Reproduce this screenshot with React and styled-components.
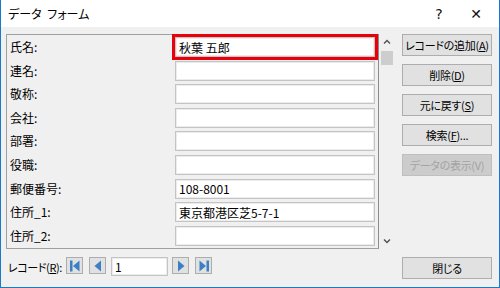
import React from "react";
import styled, { createGlobalStyle } from "styled-components";

const GlobalStyle = createGlobalStyle`
  html, body {
    margin: 0;
    padding: 0;
    background: #ffffff;
  }
  * {
    box-sizing: border-box;
  }
  body {
    font-family: "Noto Sans CJK JP", "Noto Sans", sans-serif;
    font-size: 12px;
    color: #000;
    font-feature-settings: "palt" 1;
  }
`;

const Window = styled.div`
  width: 500px;
  height: 288px;
  border: 1px solid #1979ca;
  border-top: none;
  display: flex;
  flex-direction: column;
  background: #f0f0f0;
  overflow: hidden;
`;

const TitleBar = styled.div`
  height: 27px;
  background: #ffffff;
  display: flex;
  align-items: center;
  padding-left: 7px;
  flex-shrink: 0;
`;

const Title = styled.div`
  flex: 1;
  font-size: 12px;
  word-spacing: 3px;
`;

const TitleButton = styled.div`
  width: ${(p) => p.$w}px;
  display: flex;
  justify-content: center;
  align-items: center;
  font-size: 14px;
  color: #111;
  font-family: "DejaVu Sans", sans-serif;
`;

const Body = styled.div`
  flex: 1;
  display: flex;
  flex-direction: column;
  padding: 7px 7px 0 5px;
  gap: 8px;
`;

const MainRow = styled.div`
  display: flex;
  align-items: flex-start;
`;

const Panel = styled.div`
  width: 373px;
  height: 215px;
  border: 1px solid #a0a0a0;
  border-right-color: #8c8c8c;
  padding: 2px 0 0 3px;
  display: grid;
  grid-template-columns: 165px 200px;
  grid-auto-rows: 20px;
  row-gap: 3.6px;
  align-content: start;
`;

const Label = styled.div`
  display: flex;
  align-items: center;
  font-size: 12px;
  line-height: 1;
`;

const Field = styled.div`
  height: 20px;
  background: #ffffff;
  border: 1px solid #c4c4c4;
  box-shadow: inset 0 0 0 1px #ececec;
  display: flex;
  align-items: center;
  padding-left: 3px;
  font-size: 12px;
  outline: ${(p) => (p.$highlight ? "3px solid #e8000b" : "none")};
`;

const Scrollbar = styled.div`
  width: 13px;
  height: 215px;
  margin-left: 1px;
  display: flex;
  flex-direction: column;
  align-items: center;
`;

const ScrollArrow = styled.div`
  height: 14px;
  width: 13px;
  display: flex;
  align-items: center;
  justify-content: center;
`;

const ScrollTrack = styled.div`
  flex: 1;
  width: 13px;
  padding-top: 2px;
`;

const Thumb = styled.div`
  width: 12px;
  height: 14px;
  margin-left: 1px;
  background: #cdcdcd;
`;

const ButtonColumn = styled.div`
  margin-left: 9px;
  display: flex;
  flex-direction: column;
  gap: 8px;
`;

const Button = styled.div`
  width: 90px;
  height: 22px;
  background: ${(p) => (p.$disabled ? "#cccccc" : "#e1e1e1")};
  border: 1px solid ${(p) => (p.$disabled ? "#bfbfbf" : "#adadad")};
  color: ${(p) => (p.$disabled ? "#a3a3a3" : "#000")};
  display: flex;
  align-items: center;
  justify-content: center;
  font-size: 11px;
  letter-spacing: -0.3px;
  white-space: nowrap;

  u {
    text-underline-offset: 1px;
  }
`;

const Footer = styled.div`
  display: flex;
  align-items: flex-start;
  height: 22px;
`;

const NavLabel = styled.div`
  width: 58px;
  margin-left: 2px;
  height: 20px;
  display: flex;
  align-items: center;
  font-size: 11px;
  letter-spacing: -0.4px;
  white-space: nowrap;
`;

const NavGroup = styled.div`
  display: flex;
  align-items: flex-start;
  flex: 1;
`;

const NavButton = styled.div`
  width: 17px;
  height: 17px;
  margin-left: ${(p) => p.$ml}px;
  background: #e1e1e1;
  border: 1px solid #adadad;
  display: flex;
  align-items: center;
  justify-content: center;
`;

const NavInput = styled.div`
  width: 57px;
  height: 19px;
  margin-left: 5px;
  background: #fff;
  border: 1px solid #c4c4c4;
  box-shadow: inset 0 0 0 1px #ececec;
  display: flex;
  align-items: center;
  padding-left: 3px;
  font-size: 12px;
`;

const rows = [
  ["氏名:", "秋葉 五郎", true],
  ["連名:", ""],
  ["敬称:", ""],
  ["会社:", ""],
  ["部署:", ""],
  ["役職:", ""],
  ["郵便番号:", "108-8001"],
  ["住所_1:", "東京都港区芝5-7-1"],
  ["住所_2:", ""],
];

const BLUE = "#3b7fc4";

const NavIcon = ({ dir, bar }) => (
  <svg width="12" height="12" viewBox="0 0 12 12">
    {dir === "left" ? (
      <>
        {bar && <rect x="1" y="0.5" width="2.5" height="11" fill={BLUE} />}
        <polygon points={bar ? "4,6 10.5,0.5 10.5,11.5" : "2.5,6 9,0.5 9,11.5"} fill={BLUE} />
      </>
    ) : (
      <>
        <polygon points={bar ? "1.5,0.5 1.5,11.5 8,6" : "3,0.5 3,11.5 9.5,6"} fill={BLUE} />
        {bar && <rect x="8.5" y="0.5" width="2.5" height="11" fill={BLUE} />}
      </>
    )}
  </svg>
);

const Chevron = ({ up }) => (
  <svg width="8" height="6" viewBox="0 0 8 6">
    <polyline
      points={up ? "1,4.5 4,1.5 7,4.5" : "1,1.5 4,4.5 7,1.5"}
      fill="none"
      stroke="#505050"
      strokeWidth="1.4"
    />
  </svg>
);

export default function App() {
  return (
    <>
      <GlobalStyle />
      <Window>
        <TitleBar>
          <Title>データ フォーム</Title>
          <TitleButton $w={28}>?</TitleButton>
          <TitleButton $w={46}>✕</TitleButton>
        </TitleBar>
        <Body>
          <MainRow>
            <Panel>
              {rows.map(([label, value, hl]) => (
                <React.Fragment key={label}>
                  <Label>{label}</Label>
                  <Field $highlight={hl}>{value}</Field>
                </React.Fragment>
              ))}
            </Panel>
            <Scrollbar>
              <ScrollArrow style={{ marginTop: 1 }}>
                <Chevron up />
              </ScrollArrow>
              <ScrollTrack>
                <Thumb />
              </ScrollTrack>
              <ScrollArrow style={{ marginBottom: 1 }}>
                <Chevron />
              </ScrollArrow>
            </Scrollbar>
            <ButtonColumn>
              <Button>
                レコードの追加(<u>A</u>)
              </Button>
              <Button>
                削除(<u>D</u>)
              </Button>
              <Button>
                元に戻す(<u>S</u>)
              </Button>
              <Button>
                検索(<u>F</u>)...
              </Button>
              <Button $disabled>データの表示(V)</Button>
            </ButtonColumn>
          </MainRow>
          <Footer>
            <NavLabel>
              レコード(<u>R</u>):
            </NavLabel>
            <NavGroup>
              <NavButton $ml={0}>
                <NavIcon dir="left" bar />
              </NavButton>
              <NavButton $ml={6}>
                <NavIcon dir="left" />
              </NavButton>
              <NavInput>1</NavInput>
              <NavButton $ml={4}>
                <NavIcon dir="right" />
              </NavButton>
              <NavButton $ml={6}>
                <NavIcon dir="right" bar />
              </NavButton>
            </NavGroup>
            <Button>閉じる</Button>
          </Footer>
        </Body>
      </Window>
    </>
  );
}
